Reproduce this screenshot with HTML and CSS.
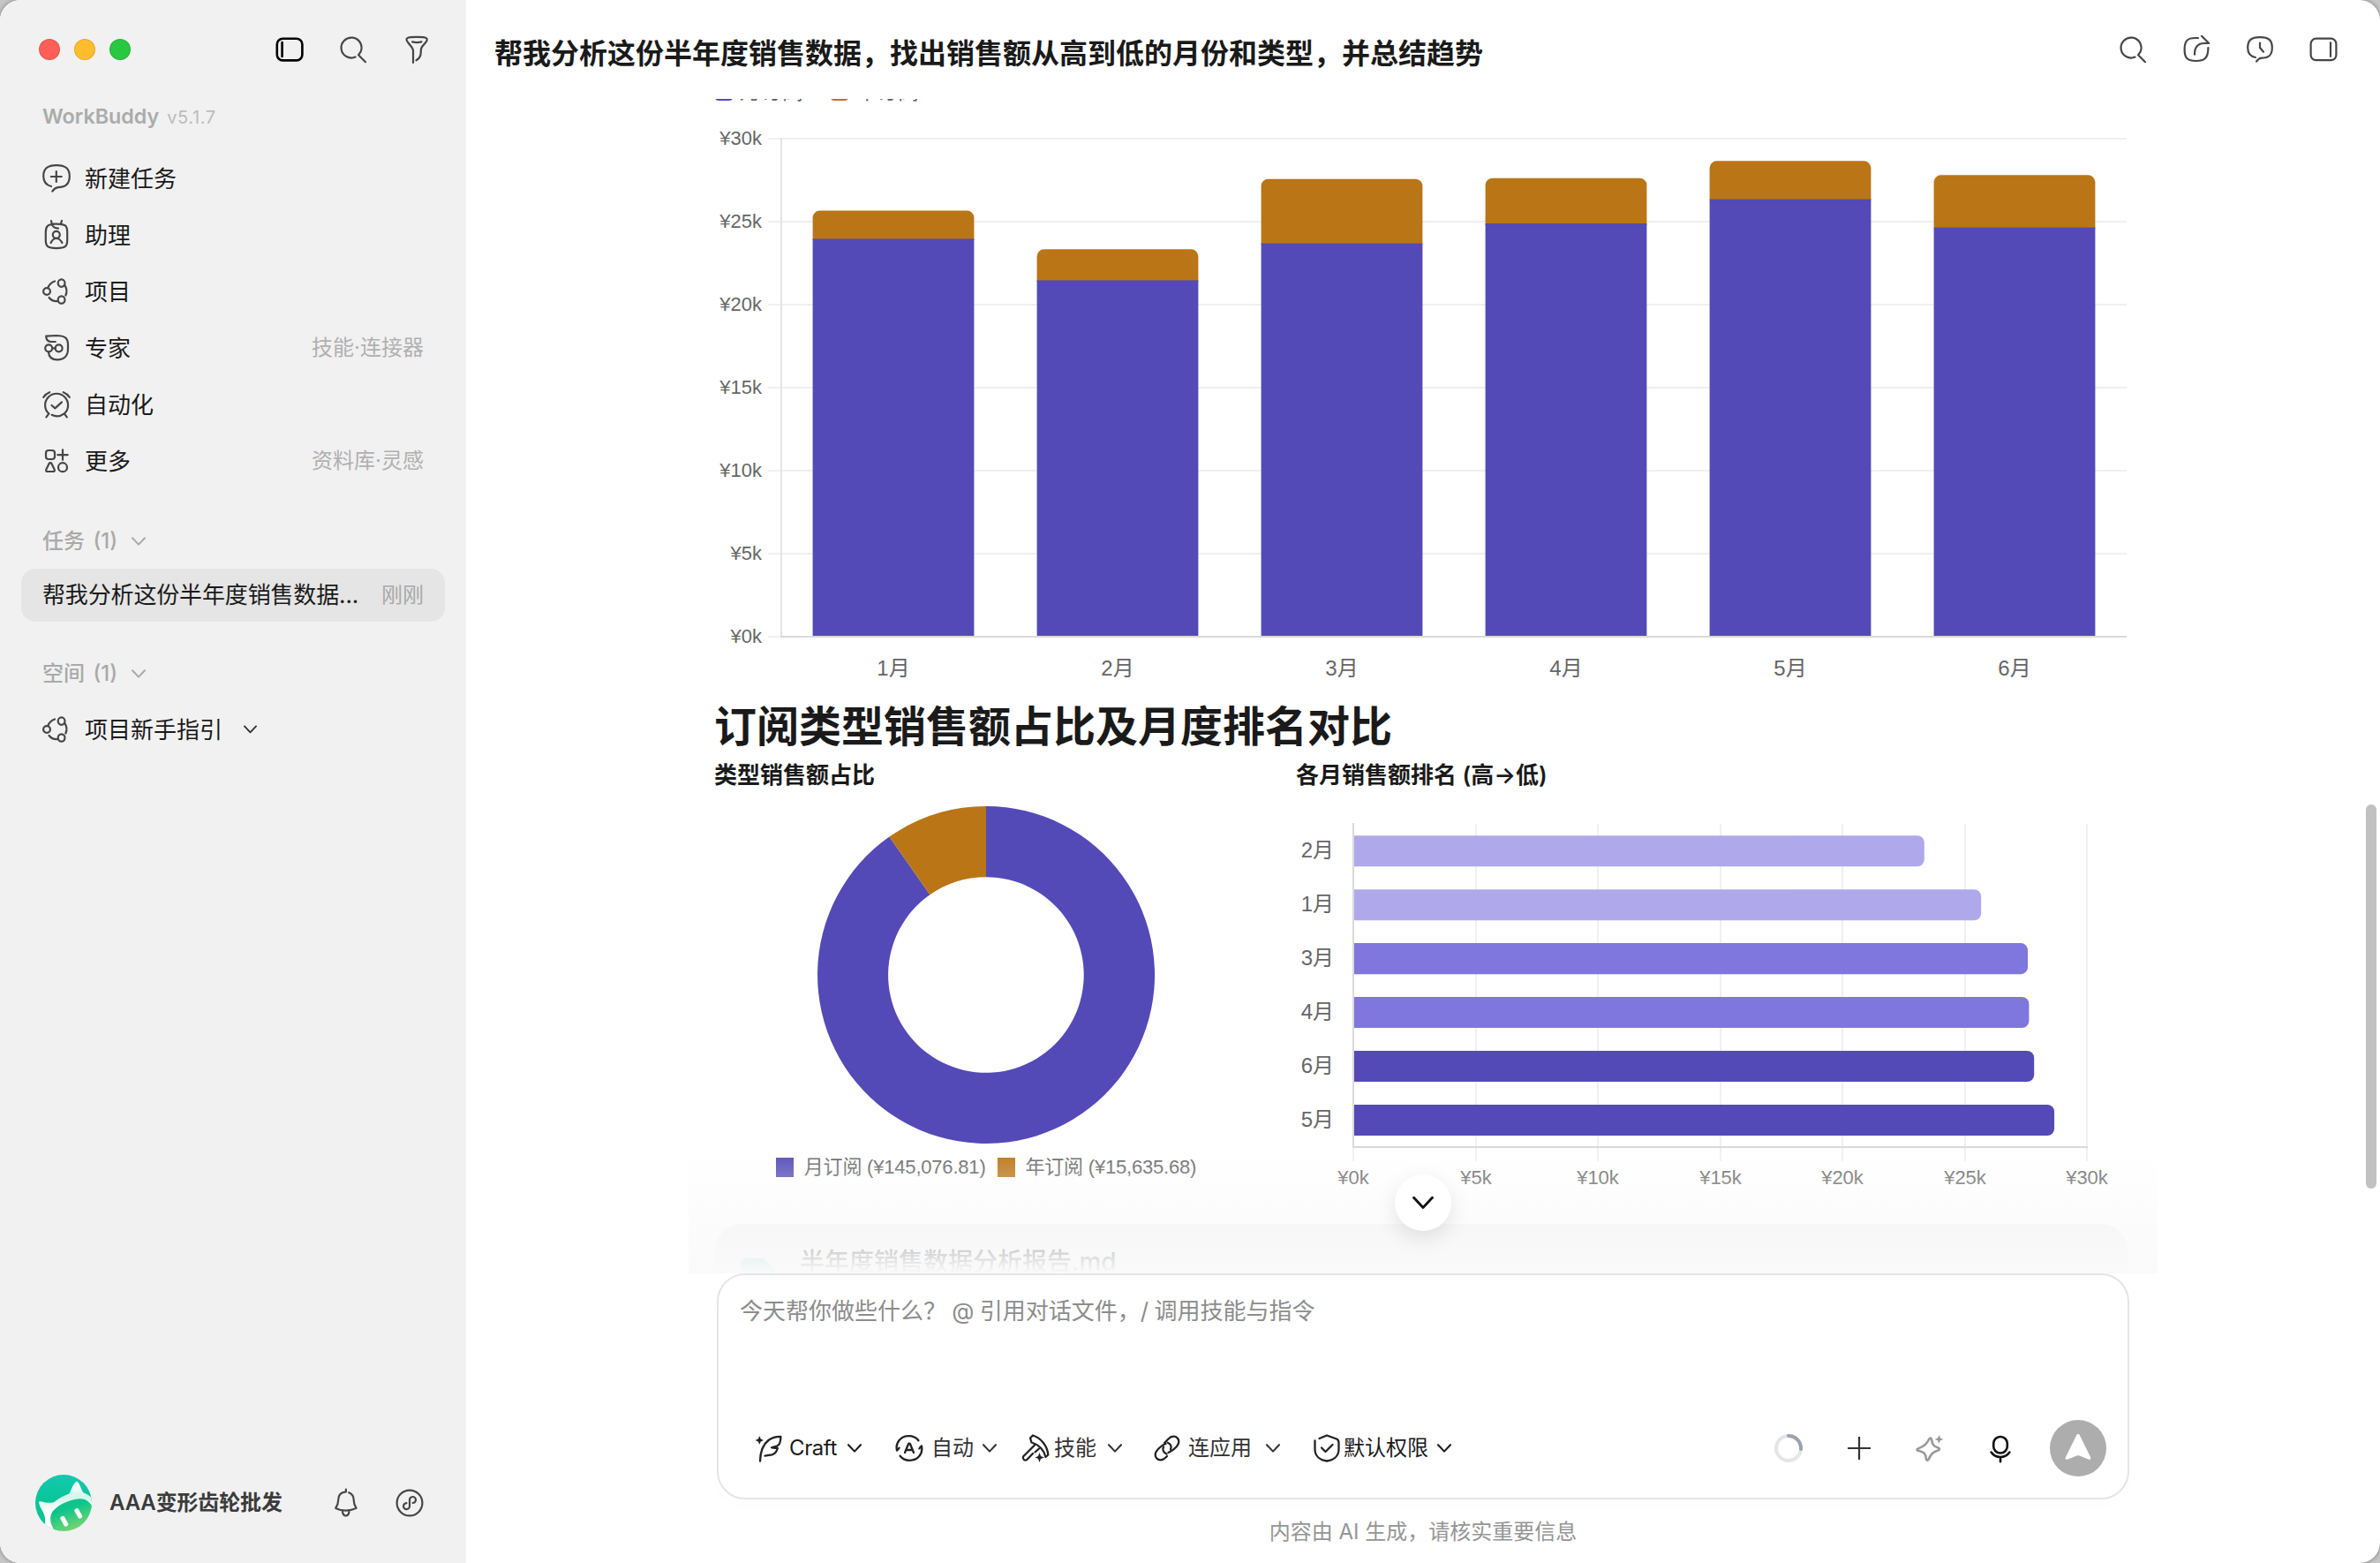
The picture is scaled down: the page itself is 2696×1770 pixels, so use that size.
FILE: index.html
```html
<!DOCTYPE html>
<html lang="zh-CN">

<head>
    <meta charset="UTF-8">
    <meta name="viewport" content="width=device-width, initial-scale=1.0">
    <title>WorkBuddy</title>
    <link rel="stylesheet" href="styles.css">
</head>

<body>

    <!-- 共用图标 -->
    <svg class="sprite">
        <symbol id="i-search" viewBox="0 0 32 32">
            <path d="M18.6 24.6A11.5 11.5 0 1 1 24.6 18.6L22 22.3L30 30.2" />
        </symbol>
        <symbol id="i-project" viewBox="0 0 32 32">
            <circle cx="5" cy="16" r="3.9" />
            <ellipse cx="21.6" cy="6.6" rx="3.9" ry="4.2" />
            <ellipse cx="21.6" cy="25.5" rx="3.9" ry="4.2" />
            <path d="M6.4 11.7C7.8 8 10.5 5.6 14 4.5M25.4 9.2C27.7 12.5 28 16.5 26.4 20.5M7.6 23C9.8 26 13.5 27.3 17.4 27" />
        </symbol>
        <symbol id="i-down" viewBox="0 0 16 16">
            <path d="M1 4.2L8 11.6L15 4.2" />
        </symbol>
    </svg>

    <div class="window">

        <div class="sidebar">
            <div class="titlebar">
                <div class="lights">
                    <span class="red"></span>
                    <span class="yellow"></span>
                    <span class="green"></span>
                </div>
                <svg class="icon icon-dark" viewBox="0 0 32 32">
                    <rect x="1.8" y="3.8" width="28.6" height="24.6" rx="6.5" />
                    <path d="M7.6 8V24" />
                </svg>
                <svg class="icon"><use href="#i-search" /></svg>
                <svg class="icon" viewBox="0 0 32 32">
                    <path d="M11 7.4C14 8.2 18.5 8.2 21.5 7.4" />
                    <path d="M12 31V17.5C12 14.5 9.5 12.5 6.5 8.5C2 3 5 1.9 16.2 1.9S30 3 26 8.3L22 13C20 15.8 21.3 18.5 20.3 22.5C19.5 25.5 17.5 27.2 15.5 28.3" />
                </svg>
            </div>

            <div class="brand">WorkBuddy<small>v5.1.7</small></div>

            <div class="menu">
                <a class="menu-item">
                    <svg class="icon" viewBox="0 0 32 32">
                        <path d="M10 25C4 23.5 1.2 20 1.2 13.5C1.2 5 5.5 1.2 16 1.2S30.8 5 30.8 13.5S26.5 26.1 17.8 26.1C14.8 26.5 13 28 11.3 30.6" />
                        <path d="M15.8 8V20M9.8 14H21.8" />
                    </svg>
                    <span>新建任务</span>
                </a>
                <a class="menu-item">
                    <svg class="icon" viewBox="0 0 32 32">
                        <path d="M13 3.8C6 4 3.8 6.5 3.8 13V22C3.8 29 6 31.1 16 31.1S28.2 29 28.2 22V13C28.2 5.5 26 3.6 16 3.6H11" />
                        <path d="M10 0C10.4 6 12.5 8.6 18 8.6M22 0L20.8 3.6" />
                        <circle cx="15.8" cy="15.8" r="4" />
                        <path d="M9.6 25C11 21.8 13 20 15.8 20S20.8 21.8 22.4 25" />
                    </svg>
                    <span>助理</span>
                </a>
                <a class="menu-item">
                    <svg class="icon"><use href="#i-project" /></svg>
                    <span>项目</span>
                </a>
                <a class="menu-item">
                    <svg class="icon" viewBox="0 0 32 32">
                        <path d="M14.8 9H10C6 9 4.3 6.5 4.2 2.6L15.8 2C25.5 2 29 4.8 29 12V17C29 25 24.5 29.3 17 29.3C10.5 29.3 7.2 26 7 20.6" />
                        <circle cx="7.2" cy="16.3" r="4" />
                        <circle cx="18.6" cy="16.3" r="4" />
                        <path d="M11.2 16.3H14.6" />
                    </svg>
                    <span>专家</span>
                    <em>技能·连接器</em>
                </a>
                <a class="menu-item">
                    <svg class="icon" viewBox="0 0 32 32">
                        <path d="M4.4 30.4L7.4 26.4A13 13 0 1 1 24.8 26.4L27.8 30.4M10.6 27.8C15 30 20.5 29.6 24.8 26.4" />
                        <path d="M1.2 7.8C3 5.2 5 3.4 8.2 2.2M23.8 2.2C27 3.4 29 5.2 30.8 7.8M10.5 17L14.4 20.4L22 13.4" />
                    </svg>
                    <span>自动化</span>
                </a>
                <a class="menu-item">
                    <svg class="icon" viewBox="0 0 32 32">
                        <rect x="4" y="4" width="10" height="10" rx="3" />
                        <path d="M23 3.4V14.8M17.3 9.1H28.7M7.6 18.9L4.4 25.4C3.6 27 4.4 28 6 28H12C13.6 28 14.4 27 13.6 25.4L10.4 18.9C9.8 17.8 8.2 17.8 7.6 18.9Z" />
                        <circle cx="23" cy="23.2" r="5" />
                    </svg>
                    <span>更多</span>
                    <em>资料库·灵感</em>
                </a>
            </div>

            <div class="group-title"><span>任务 (1)</span><svg class="chevron"><use href="#i-down" /></svg></div>
            <a class="task active">
                <span>帮我分析这份半年度销售数据...</span>
                <em>刚刚</em>
            </a>

            <div class="group-title"><span>空间 (1)</span><svg class="chevron"><use href="#i-down" /></svg></div>
            <a class="menu-item space">
                <svg class="icon"><use href="#i-project" /></svg>
                <span>项目新手指引</span>
                <svg class="chevron"><use href="#i-down" /></svg>
            </a>

            <div class="account">
                <svg class="avatar" viewBox="0 0 64 64">
                    <defs>
                        <linearGradient id="g-bg" x1="0" y1="0" x2="0" y2="1">
                            <stop offset="0" stop-color="#14c8b0" />
                            <stop offset=".5" stop-color="#08c596" />
                        </linearGradient>
                        <linearGradient id="g-head" x1="0" y1="0" x2="0" y2="1">
                            <stop offset="0" stop-color="#fff" />
                            <stop offset=".3" stop-color="#d5f5ec" />
                            <stop offset=".6" stop-color="#fff" />
                        </linearGradient>
                        <linearGradient id="g-face" x1=".2" y1="0" x2=".7" y2="1">
                            <stop offset=".3" stop-color="#0bc58c" />
                            <stop offset="1" stop-color="#8fd966" />
                        </linearGradient>
                        <clipPath id="c-avatar"><circle cx="32" cy="32" r="32" /></clipPath>
                    </defs>
                    <g clip-path="url(#c-avatar)">
                        <rect width="64" height="64" fill="url(#g-bg)" />
                        <path d="M11 66V50C11 43 5 38 4 31.5C4 30.5 5 30 6 30.2C11 31.5 16 32.5 21 31.2C26 27 33 23.5 38.5 21.5C40.5 18 42 12 45.5 8.5C46.4 7.6 47.6 7.6 48.4 8.6C51 12 52 17 54.5 20.5C59 22 62 24 66 28V66Z" fill="url(#g-head)" />
                        <path d="M24 66C16 57 15 46 21 40C28 33 40 28 50 27.3C57 26.5 62 31 66 38V66Z" fill="url(#g-face)" />
                        <path d="M31 49.5L34.6 56M47 40.7L50.6 47" stroke="#fff" stroke-width="5.2" stroke-linecap="round" />
                    </g>
                </svg>
                <strong>AAA变形齿轮批发</strong>
                <svg class="icon bell" viewBox="0 0 32 32">
                    <path d="M15.9 .5V3.4C10.5 3.8 7.2 7.2 7.2 12.5C7.2 17 6.6 18.4 4.2 21.9C11 25.4 21 25.4 27.6 21.9C25.2 18.4 24.7 17 24.7 12.5C24.7 8.6 22.7 5.6 19.2 4.2M12 26C12.5 29 13.7 30.5 15.7 30.5S19 29 19.5 26" />
                </svg>
                <svg class="icon" viewBox="0 0 32 32">
                    <circle cx="16" cy="16" r="14.4" />
                    <path d="M12.4 16.2A3.5 3.5 0 1 0 16 19.6V12.6A3.5 3.5 0 1 1 19.6 16" />
                </svg>
            </div>
        </div>

        <div class="main">
            <div class="header">
                <h1>帮我分析这份半年度销售数据，找出销售额从高到低的月份和类型，并总结趋势</h1>
                <svg class="icon"><use href="#i-search" /></svg>
                <svg class="icon" viewBox="0 0 32 32">
                    <path d="M18 3H15C6 3 2.6 6 2.6 16S6 29 15.5 29S29.4 26 29.4 14" />
                    <path d="M22 .8L30.2 9H25C18 9 14 13.5 14 21.7" />
                </svg>
                <svg class="icon" viewBox="0 0 32 32">
                    <path d="M11 25C4.8 23.8 2.2 20.5 2.2 14C2.2 5.5 6 2.2 16 2.2S29.8 5.5 29.8 14S26 25.6 18 25.6C15 25.6 14 27 12 29.6" />
                    <path d="M16 8.7V14L20 18.7" />
                </svg>
                <svg class="icon" viewBox="0 0 32 32">
                    <rect x="1.6" y="3.7" width="28.8" height="24.5" rx="6" />
                    <path d="M24 8.3V24" />
                </svg>
            </div>

            <div class="chat">
                <div class="legend">
                    <i class="month"></i><span>月订阅</span>
                    <i class="year"></i><span>年订阅</span>
                </div>

                <!-- 每月销售额堆叠柱状图 -->
                <svg class="bar-chart" viewBox="0 0 1600 636">
                    <path class="grid" d="M60 17H1599M60 111H1599M60 205H1599M60 299H1599M60 393H1599M60 487H1599M60 581H1599" />
                    <path class="axis" d="M75 16V582" />
                    <g class="year">
                        <path d="M110.6 132V106.6a8 8 0 0 1 8-8h166.8a8 8 0 0 1 8 8V132z" />
                        <path d="M364.6 179V150.3a8 8 0 0 1 8-8h166.8a8 8 0 0 1 8 8V179z" />
                        <path d="M618.6 137V70.7a8 8 0 0 1 8-8h166.8a8 8 0 0 1 8 8V137z" />
                        <path d="M872.6 115V69.7a8 8 0 0 1 8-8h166.8a8 8 0 0 1 8 8V115z" />
                        <path d="M1126.6 87V50.3a8 8 0 0 1 8-8h166.8a8 8 0 0 1 8 8V87z" />
                        <path d="M1380.6 119V66.3a8 8 0 0 1 8-8h166.8a8 8 0 0 1 8 8V119z" />
                    </g>
                    <g class="month">
                        <rect x="110.6" y="130.4" width="182.8" height="449.9" />
                        <rect x="364.6" y="177.4" width="182.8" height="402.9" />
                        <rect x="618.6" y="135.6" width="182.8" height="444.7" />
                        <rect x="872.6" y="113" width="182.8" height="467.3" />
                        <rect x="1126.6" y="85.6" width="182.8" height="494.7" />
                        <rect x="1380.6" y="117.6" width="182.8" height="462.7" />
                    </g>
                    <path class="base" d="M74 581H1599" />
                    <g class="tick" text-anchor="end">
                        <text x="53" y="24">¥30k</text>
                        <text x="53" y="118">¥25k</text>
                        <text x="53" y="212">¥20k</text>
                        <text x="53" y="306">¥15k</text>
                        <text x="53" y="400">¥10k</text>
                        <text x="53" y="494">¥5k</text>
                        <text x="53" y="588">¥0k</text>
                    </g>
                    <g class="label" text-anchor="middle">
                        <text x="202" y="625">1月</text>
                        <text x="456" y="625">2月</text>
                        <text x="710" y="625">3月</text>
                        <text x="964" y="625">4月</text>
                        <text x="1218" y="625">5月</text>
                        <text x="1472" y="625">6月</text>
                    </g>
                </svg>

                <h2>订阅类型销售额占比及月度排名对比</h2>

                <div class="compare">
                    <div class="share">
                        <h3>类型销售额占比</h3>
                        <svg class="donut" viewBox="-200 -209 400 400">
                            <path class="month" d="M0 -191A191 191 0 1 1 -109.6 -156.4L-63.6 -90.8A110.8 110.8 0 1 0 0 -110.8Z" />
                            <path class="year" d="M-109.6 -156.4A191 191 0 0 1 0 -191V-110.8A110.8 110.8 0 0 0 -63.6 -90.8Z" />
                        </svg>
                        <div class="legend-share">
                            <i class="month"></i><span>月订阅 (¥145,076.81)</span>
                            <i class="year"></i><span>年订阅 (¥15,635.68)</span>
                        </div>
                    </div>

                    <div class="rank">
                        <h3>各月销售额排名 (高→低)</h3>
                        <svg class="rank-chart" viewBox="0 0 940 455">
                            <path class="grid" d="M64 38V420M203 38V420M341 38V420M480 38V420M618 38V420M757 38V420M895 38V420" />
                            <path class="base" d="M63 404H896" />
                            <g class="low">
                                <path d="M65 51.2H702.8a8 8 0 0 1 8 8V78.3a8 8 0 0 1 -8 8H65z" />
                                <path d="M65 112.2H767.2a8 8 0 0 1 8 8V139.3a8 8 0 0 1 -8 8H65z" />
                            </g>
                            <g class="mid">
                                <path d="M65 173.1H820.1a8 8 0 0 1 8 8V200.2a8 8 0 0 1 -8 8H65z" />
                                <path d="M65 234H821.4a8 8 0 0 1 8 8V261.1a8 8 0 0 1 -8 8H65z" />
                            </g>
                            <g class="month">
                                <path d="M65 295H827.2a8 8 0 0 1 8 8V322.1a8 8 0 0 1 -8 8H65z" />
                                <path d="M65 356H850.1a8 8 0 0 1 8 8V383a8 8 0 0 1 -8 8H65z" />
                            </g>
                            <path class="base" d="M64 37V405" />
                            <g class="label" text-anchor="end">
                                <text x="42" y="76">2月</text>
                                <text x="42" y="137">1月</text>
                                <text x="42" y="198">3月</text>
                                <text x="42" y="259">4月</text>
                                <text x="42" y="320">6月</text>
                                <text x="42" y="381">5月</text>
                            </g>
                            <g class="tick" text-anchor="middle">
                                <text x="64" y="446">¥0k</text>
                                <text x="203" y="446">¥5k</text>
                                <text x="341" y="446">¥10k</text>
                                <text x="480" y="446">¥15k</text>
                                <text x="618" y="446">¥20k</text>
                                <text x="757" y="446">¥25k</text>
                                <text x="895" y="446">¥30k</text>
                            </g>
                        </svg>
                    </div>
                </div>

                <div class="file">
                    <svg viewBox="0 0 42 52">
                        <path d="M6 0H26L42 16V46a6 6 0 0 1 -6 6H6a6 6 0 0 1 -6 -6V6a6 6 0 0 1 6 -6z" />
                    </svg>
                    <span>半年度销售数据分析报告.md</span>
                </div>

                <div class="fade"></div>
                <div class="to-bottom"><svg><use href="#i-down" /></svg></div>
                <div class="scrollbar"></div>
            </div>

            <div class="composer">
                <div class="placeholder">今天帮你做些什么？ @ 引用对话文件，/ 调用技能与指令</div>
                <div class="toolbar">
                    <div class="tool craft">
                        <svg class="icon" viewBox="0 0 32 32">
                            <path class="solid" d="M5.3 2.2L6.8 5.5L10 7L6.8 8.5L5.3 11.8L3.8 8.5L.6 7L3.8 5.5Z" />
                            <path d="M6 30.7C6.2 21 9 12 15.5 7C19.5 4 24.5 2.8 29.4 2.9C29.4 8 28 12.5 24.8 13.6L19 15.3L25.8 16C24.8 20 22.8 22.4 19.5 23.4L11.5 24.6" />
                        </svg>
                        <span>Craft</span>
                        <svg class="chevron"><use href="#i-down" /></svg>
                    </div>
                    <div class="tool auto">
                        <svg class="icon" viewBox="0 0 32 32">
                            <path d="M2 18.5C3 17.8 4 16.8 4.6 15.6M2 18.5C0 9.5 6.5 2.2 15.5 2.2C20 2.2 24 4.2 26.4 7.3M30 13.5C28.8 14.2 28 15.2 27.4 16.4M30 13.5C31.8 22.5 25.5 29.8 16.5 29.8C12 29.8 8 27.8 5.6 24.7" />
                            <path d="M11 21L15 11.3C15.4 10.4 16.6 10.4 17 11.3L21 21M12.5 18H19.5" />
                        </svg>
                        <span>自动</span>
                        <svg class="chevron"><use href="#i-down" /></svg>
                    </div>
                    <div class="tool skill">
                        <svg class="icon" viewBox="0 0 32 32">
                            <path d="M10 4.5L13 1.5C22 4.5 29.5 13 30.3 23.5L27.5 26C25.5 18.5 20 12 11.5 9.5Z" />
                            <path d="M15 12.5L2 25.5C1 28 3.5 30.5 6 29.3L13 22M20 16.5L15.5 20.5" />
                            <path class="solid" d="M20.5 21L22 25L26 26.5L22 28L20.5 32L19 28L15.5 26.5L19 25Z" />
                        </svg>
                        <span>技能</span>
                        <svg class="chevron"><use href="#i-down" /></svg>
                    </div>
                    <div class="tool link">
                        <svg class="icon" viewBox="0 0 32 32">
                            <path d="M12 14.5C10.5 18 12 21 15.5 22.5M17.5 20.8C21 20 22.5 18.5 26.5 14.5C34 7 25 -2 17.5 5.5L13 10M14.5 11C10.5 12 9.5 13.5 5.5 17.5C-2 25 7 34 14.5 26.5L16 25M20 17.5C21.5 14 20 11 16.8 9.7" />
                        </svg>
                        <span>连应用</span>
                        <svg class="chevron"><use href="#i-down" /></svg>
                    </div>
                    <div class="tool auth">
                        <svg class="icon" viewBox="0 0 32 32">
                            <path d="M7.5 5L16 1.5L27 5.5C29 6.3 29.5 7.5 29.5 10V17C29.5 25 23.5 29.5 16 30.5C8.5 29.5 2.5 25 2.5 17V7.5" />
                            <path d="M10 15.5L14.5 20L22.5 12" />
                        </svg>
                        <span>默认权限</span>
                        <svg class="chevron"><use href="#i-down" /></svg>
                    </div>

                    <div class="actions">
                        <svg class="icon spinner" viewBox="0 0 32 32">
                            <circle cx="16" cy="16" r="14" />
                            <path d="M16 2A14 14 0 0 1 30 16V17" />
                        </svg>
                        <svg class="icon plus" viewBox="0 0 32 32">
                            <path d="M16 3V29M3 16H29" />
                        </svg>
                        <svg class="icon sparkle" viewBox="0 0 32 32">
                            <path d="M15.4 5.5C16.4 4 17.6 4.3 18 6C18.7 11.5 20 13.7 26 15.8C27.3 16.5 27.3 17.5 26 18.2C19.5 20.2 18 22 14.5 28.8C13.5 30.3 12.3 30 12 28.5C11.5 22.5 10 20.2 2.5 18.8C1.2 18.2 1.2 17.3 2.5 16.6C10 13.5 12 12 15.4 5.5Z" />
                            <path class="solid" d="M26.6 1L28 4.6L31.4 6L28 7.2L26.2 10.8L25 7.2L21.6 6L25 4.6Z" />
                        </svg>
                        <svg class="icon mic" viewBox="0 0 32 32">
                            <rect x="8.2" y="3" width="15.6" height="18.5" rx="7.6" />
                            <path d="M5.6 20.5C10.5 27.8 21.5 27.8 26.4 20.5M16 26V31.3" />
                        </svg>
                        <div class="send">
                            <svg viewBox="0 0 32 32">
                                <path d="M14.3 1C15.3 -.9 16.7 -.9 17.7 1L30 26C31 28.5 29.5 29.3 27.5 28.6L17.5 24.5C16.5 24.1 15.5 24.1 14.5 24.5L4.5 28.6C2.5 29.3 1 28.5 2 26Z" />
                            </svg>
                        </div>
                    </div>
                </div>
            </div>

            <div class="notice">内容由 AI 生成，请核实重要信息</div>
        </div>
    </div>

</body>

</html>
```
FILE: styles.css
```css
* {
    padding: 0;
    margin: 0;
    box-sizing: border-box;
}

body {
    background-color: #c6c6c6;
    font-family: Inter, "Noto Sans CJK SC", sans-serif;
    font-size: 26px;
    color: #1a1a1a;
}

em {
    font-style: normal;
}

.sprite {
    display: none;
}

.window {
    display: flex;
    width: 2696px;
    height: 1770px;
    overflow: hidden;
    border-radius: 23px;
    background-color: #fff;
    box-shadow: 0 0 5px rgba(0, 0, 0, .4);
}

/* 线条图标 */
.icon {
    flex: none;
    width: 32px;
    height: 32px;
    overflow: visible;
    fill: none;
    stroke: #464646;
    stroke-width: 2.2;
    stroke-linecap: round;
    stroke-linejoin: round;
}

.icon-dark {
    stroke: #000;
    stroke-width: 2.6;
}

.chevron {
    flex: none;
    width: 16px;
    height: 16px;
    fill: none;
    stroke: currentColor;
    stroke-width: 2;
    stroke-linecap: round;
    stroke-linejoin: round;
}

/* 左侧栏 */
.sidebar {
    display: flex;
    flex-direction: column;
    width: 528px;
    padding: 40px 24px 36px;
    background-color: #f1f1f1;
}

.titlebar {
    display: flex;
    gap: 40px;
    height: 32px;
    padding: 0 16px 0 20px;
}

.lights {
    display: flex;
    align-items: center;
    gap: 16px;
    margin-right: auto;
}

.lights span {
    width: 24px;
    height: 24px;
    border-radius: 50%;
    border: 1px solid rgba(0, 0, 0, .1);
}

.red {
    background-color: #ff5f57;
}

.yellow {
    background-color: #febc2e;
}

.green {
    background-color: #28c840;
}

.brand {
    margin-top: 45px;
    padding-left: 24px;
    height: 30px;
    line-height: 30px;
    font-size: 23.3px;
    font-weight: 600;
    color: #ababab;
}

.brand small {
    margin-left: 9px;
    font-size: 20px;
    font-weight: 400;
    letter-spacing: .6px;
    color: #bcbcbc;
}

.menu {
    margin-top: 23px;
}

.menu-item {
    display: flex;
    align-items: center;
    height: 64px;
    padding: 0 24px;
}

.menu-item span {
    margin-left: 16px;
    padding-top: 1px;
    line-height: 32px;
}

.menu-item em {
    margin-left: auto;
    line-height: 32px;
    font-size: 24px;
    color: #b0b0b0;
}

.group-title {
    display: flex;
    align-items: center;
    gap: 16px;
    height: 60px;
    margin-top: 30px;
    padding: 0 0 2px 24px;
    font-size: 24px;
    font-weight: 500;
    color: #a9a9a9;
}

.group-title span {
    line-height: 32px;
    word-spacing: 3px;
}

.task {
    display: flex;
    align-items: center;
    justify-content: space-between;
    height: 60px;
    padding: 0 24px;
    border-radius: 16px;
    line-height: 32px;
    white-space: nowrap;
}

.task span {
    letter-spacing: -.15px;
}

.task.active {
    background-color: #e5e5e5;
}

.task em {
    font-size: 24px;
    color: #a9a9a9;
}

.space .chevron {
    width: 15px;
    margin-left: 24px;
    color: #333;
}

.account {
    display: flex;
    align-items: center;
    margin-top: auto;
    padding: 0 24px 0 16px;
    height: 64px;
}

.avatar {
    width: 64px;
    height: 64px;
}

.account strong {
    margin: 0 auto 0 20px;
    line-height: 32px;
    font-size: 24px;
    font-weight: 600;
    letter-spacing: -.15px;
    color: #3b3b3b;
}

.bell {
    margin-right: 40px;
}

/* 右侧主区域 */
.main {
    width: 2168px;
}

.header {
    display: flex;
    gap: 40px;
    height: 112px;
    padding: 40px 48px 0 32px;
}

.header h1 {
    margin-right: auto;
    height: 42px;
    line-height: 42px;
    font-size: 32px;
    font-weight: 600;
}

.chat {
    position: relative;
    height: 1330px;
    padding: 0 286px 0 282px;
    overflow: hidden;
}

.month {
    fill: #534ab7;
    background-color: #534ab7;
}

.year {
    fill: #ba7517;
    background-color: #ba7517;
}

.low {
    fill: #afa9ec;
}

.mid {
    fill: #7f77dd;
}

/* 图例随内容滚动，只露出底边 */
.legend {
    display: flex;
    align-items: center;
    height: 24px;
    margin-top: -20px;
    font-size: 24px;
    line-height: 24px;
    color: #666;
}

.legend i {
    width: 20px;
    height: 20px;
    margin-right: 8px;
    border-radius: 4px;
}

.legend span {
    margin-right: 31px;
}

.bar-chart {
    display: block;
    width: 1600px;
    height: 636px;
    margin-top: 24px;
}

.grid,
.axis,
.base {
    fill: none;
    stroke-width: 2;
    stroke: #f0f0f0;
}

.axis {
    stroke: #e4e4e4;
}

.base {
    stroke: #d9d9d9;
}

.tick {
    font: 22px "Liberation Sans", sans-serif;
    fill: #666;
}

.label {
    font: 24px "Liberation Sans", "Noto Sans CJK SC", sans-serif;
    fill: #666;
}

.chat h2 {
    margin: 17px 0 0 -1px;
    height: 60px;
    line-height: 60px;
    font-size: 48px;
    font-weight: 700;
}

.chat h3 {
    height: 34px;
    margin-left: -1px;
    line-height: 34px;
    font-size: 26px;
    font-weight: 600;
}

.compare {
    display: grid;
    grid-template-columns: 614px 940px;
    column-gap: 45px;
    margin-top: 8px;
}

.donut {
    display: block;
    width: 400px;
    height: 400px;
    margin: 0 auto;
}

.legend-share {
    display: flex;
    align-items: center;
    justify-content: center;
    height: 22px;
    margin-top: 16px;
    font: 22px/22px "Liberation Sans", "Noto Sans CJK SC", sans-serif;
    letter-spacing: -.2px;
    color: #666;
}

.legend-share i {
    width: 20px;
    height: 22px;
    margin-right: 12px;
}

.legend-share span + i {
    margin-left: 13px;
}

.rank-chart {
    display: block;
    width: 940px;
    height: 455px;
}

.file {
    display: flex;
    height: 120px;
    margin-top: 36px;
    padding: 22px 28px;
    border-radius: 30px;
    background-color: #f2f2f2;
}

.file svg {
    width: 42px;
    height: 52px;
    margin: 17px 25px 0 1px;
    fill: #5fd0c8;
}

.file span {
    line-height: 43px;
    font-size: 28px;
    font-weight: 500;
}

/* 底部渐隐，盖在聊天内容上 */
.fade {
    position: absolute;
    left: 252px;
    bottom: 0;
    width: 1664px;
    height: 144px;
    background-image: linear-gradient(rgba(250, 250, 250, 0), #fafafa);
}

.to-bottom {
    position: absolute;
    left: 1052px;
    bottom: 48px;
    width: 64px;
    height: 64px;
    padding: 20px;
    border-radius: 50%;
    background-color: #fff;
    box-shadow: 0 8px 24px rgba(0, 0, 0, .1);
}

.to-bottom svg {
    display: block;
    width: 24px;
    height: 24px;
    fill: none;
    stroke: #111;
    stroke-width: 1.9;
    stroke-linecap: round;
    stroke-linejoin: round;
}

.scrollbar {
    position: absolute;
    right: 4px;
    top: 799px;
    width: 12px;
    height: 435px;
    border-radius: 6px;
    background-color: #c1c1c1;
}

/* 输入框 */
.composer {
    display: flex;
    flex-direction: column;
    justify-content: space-between;
    width: 1600px;
    height: 256px;
    margin-left: 284px;
    padding: 23px 24px 24px;
    border: 2px solid #e5e5e5;
    border-radius: 32px;
    background-color: #fff;
    box-shadow: 0 8px 20px rgba(0, 0, 0, .01);
}

.placeholder {
    height: 36px;
    line-height: 36px;
    word-spacing: -1px;
    color: #8c8c8c;
}

.toolbar {
    display: flex;
    align-items: center;
    height: 64px;
    padding-left: 17px;
}

.tool {
    display: flex;
    align-items: center;
    line-height: 32px;
    font-size: 24px;
    white-space: nowrap;
}

.tool .icon {
    stroke: #222;
    stroke-width: 2.3;
}

.icon .solid {
    fill: #222;
    stroke: none;
}

.tool .chevron {
    margin-left: auto;
    stroke-width: 2.1;
}

.craft {
    width: 121px;
    margin-right: 38px;
}

.craft span {
    margin-left: 7px;
    letter-spacing: -.4px;
}

.auto,
.skill,
.link {
    color: #333;
}

.auto {
    width: 115px;
    margin-right: 28px;
}

.auto span {
    margin-left: 9px;
}

.skill {
    width: 114px;
    margin-right: 35px;
}

.skill span {
    margin-left: 5px;
}

.link {
    width: 144px;
    margin-right: 37px;
}

.link span {
    margin-left: 8px;
}

.auth {
    width: 157px;
}

.auth span {
    margin-left: 3px;
}

.actions {
    display: flex;
    align-items: center;
    gap: 48px;
    margin-left: auto;
}

.spinner {
    stroke: #e5e5e5;
    stroke-width: 4;
}

.spinner path {
    stroke: #9ca3af;
}

.plus {
    stroke: #333;
    stroke-linecap: butt;
}

.sparkle {
    stroke: #999;
    stroke-width: 2.6;
}

.sparkle .solid {
    fill: #999;
}

.mic {
    stroke: #111;
    stroke-width: 2.6;
}

.send {
    width: 64px;
    height: 64px;
    margin-left: -8px;
    padding: 16px;
    border-radius: 50%;
    background-color: #adadad;
}

.send svg {
    display: block;
    width: 32px;
    height: 32px;
    fill: #fff;
}

.notice {
    height: 72px;
    line-height: 74px;
    text-align: center;
    font-size: 24px;
    color: #959595;
}
```
